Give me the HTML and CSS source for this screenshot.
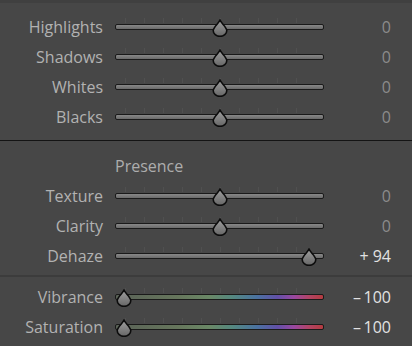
FILE: index.html
```html
<!DOCTYPE html>
<html lang="en">
<head>
    <meta charset="UTF-8">
    <meta name="viewport" content="width=device-width, initial-scale=1.0">
    <title>Basic</title>
    <link rel="stylesheet" href="styles.css">
</head>
<body>
    <div class="panel">
        <div class="section tone">
            <div class="row">
                <span class="label">Highlights</span>
                <div class="slider"><div class="track"></div><span class="thumb" style="--pos: 0.5"></span></div>
                <span class="value">0</span>
            </div>
            <div class="row">
                <span class="label">Shadows</span>
                <div class="slider"><div class="track"></div><span class="thumb" style="--pos: 0.5"></span></div>
                <span class="value">0</span>
            </div>
            <div class="row">
                <span class="label">Whites</span>
                <div class="slider"><div class="track"></div><span class="thumb" style="--pos: 0.5"></span></div>
                <span class="value">0</span>
            </div>
            <div class="row">
                <span class="label">Blacks</span>
                <div class="slider"><div class="track"></div><span class="thumb" style="--pos: 0.5"></span></div>
                <span class="value">0</span>
            </div>
        </div>

        <div class="section presence">
            <div class="row heading">
                <span class="label"></span>
                <span class="title">Presence</span>
            </div>
            <div class="row">
                <span class="label">Texture</span>
                <div class="slider"><div class="track"></div><span class="thumb" style="--pos: 0.5"></span></div>
                <span class="value">0</span>
            </div>
            <div class="row">
                <span class="label">Clarity</span>
                <div class="slider"><div class="track"></div><span class="thumb" style="--pos: 0.5"></span></div>
                <span class="value">0</span>
            </div>
            <div class="row">
                <span class="label">Dehaze</span>
                <div class="slider"><div class="track"></div><span class="thumb" style="--pos: 0.97"></span></div>
                <span class="value changed">+ 94</span>
            </div>
        </div>

        <div class="section color">
            <div class="row">
                <span class="label">Vibrance</span>
                <div class="slider"><div class="track spectrum"></div><span class="thumb" style="--pos: 0"></span></div>
                <span class="value changed">&ndash;&thinsp;100</span>
            </div>
            <div class="row">
                <span class="label">Saturation</span>
                <div class="slider"><div class="track spectrum"></div><span class="thumb" style="--pos: 0"></span></div>
                <span class="value changed">&ndash;&thinsp;100</span>
            </div>
        </div>
    </div>
</body>
</html>
```

FILE: styles.css
```css
body {
    margin: 0;
    padding: 0;
    background-color: #474747;
    font-family: "Open Sans", Arial, sans-serif;
    font-size: 16px;
    color: #b2b2b2;
}
.panel {
    width: 412px;
    border-top: 3px solid #404040;
}
.section {
    display: flex;
    flex-direction: column;
}
.tone {
    padding: 9px 0 8px;
    border-bottom: 1px solid #141414;
}
.presence {
    padding: 10px 0 4px;
    border-bottom: 2px solid #3c3c3c;
}
.color {
    padding: 5px 0 4px;
}
.row {
    display: flex;
    align-items: center;
    height: 30px;
}
.label {
    width: 103px;
    margin-right: 12px;
    text-align: right;
    white-space: nowrap;
}
.title {
    color: #adadad;
}
.slider {
    position: relative;
    width: 209px;
    height: 30px;
}
/* tick marks above the track */
.slider::before {
    content: "";
    position: absolute;
    left: 10px;
    width: 190px;
    top: 6px;
    height: 5px;
    background: repeating-linear-gradient(to right, #505050 0 1px, transparent 1px 19px);
}
.track {
    position: absolute;
    left: 0;
    right: 0;
    top: 12px;
    height: 4px;
    border: 1px solid #1a1a1a;
    border-radius: 2px;
    background: linear-gradient(to bottom, #888888, #6a6a6a);
}
.track.spectrum {
    background: linear-gradient(to right, #5a6257 0%, #66765c 30%, #6a8866 45%, #55887f 56%, #4a72a0 68%, #6250a8 78%, #9a48a0 86%, #b24466 93%, #b43c40 100%);
}
.thumb {
    position: absolute;
    top: 7px;
    left: calc(9px + (100% - 18px) * var(--pos));
    width: 16px;
    height: 18px;
    margin-left: -8px;
    background: url("data:image/svg+xml;utf8,<svg xmlns='http://www.w3.org/2000/svg' width='16' height='18' viewBox='0 0 16 18'><defs><linearGradient id='g' x1='0' y1='0' x2='0' y2='1'><stop offset='0' stop-color='%23a0a0a0'/><stop offset='1' stop-color='%23666666'/></linearGradient></defs><path d='M8 1.2 C9.6 4.6 14.8 8.2 14.8 11.6 A6.8 5.8 0 0 1 1.2 11.6 C1.2 8.2 6.4 4.6 8 1.2 Z' fill='url(%23g)' stroke='%230c0c0c' stroke-width='1.6'/></svg>") no-repeat;
}
.value {
    width: 67px;
    text-align: right;
    color: #8c8c8c;
}
.value.changed {
    color: #e2e2e2;
}
```
